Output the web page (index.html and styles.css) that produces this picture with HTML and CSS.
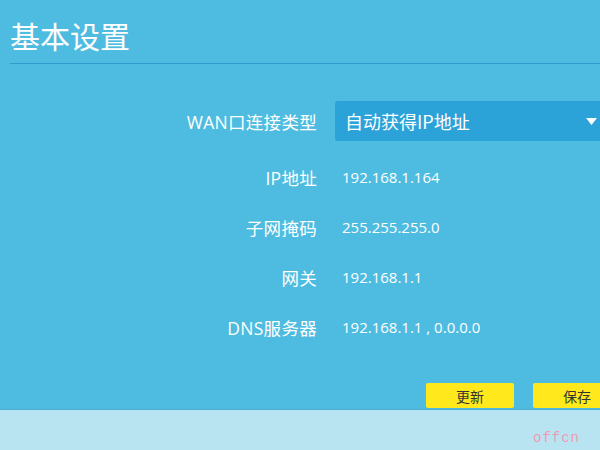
FILE: index.html
```html
<!DOCTYPE html>
<html lang="zh-CN">
<head>
    <meta charset="UTF-8">
    <meta name="viewport" content="width=device-width, initial-scale=1.0">
    <title>基本设置</title>
    <link rel="stylesheet" href="styles.css">
</head>
<body>
    <div class="panel">
        <h1 class="title">基本设置</h1>
        <div class="form">
            <div class="row row-select">
                <label class="label">WAN口连接类型</label>
                <div class="select">
                    <span>自动获得IP地址</span>
                    <svg class="arrow" width="11" height="7" viewBox="0 0 11 7"><polygon points="0,0 11,0 5.5,7" fill="#fff"/></svg>
                </div>
            </div>
            <div class="row">
                <label class="label">IP地址</label>
                <div class="value">192.168.1.164</div>
            </div>
            <div class="row">
                <label class="label">子网掩码</label>
                <div class="value">255.255.255.0</div>
            </div>
            <div class="row">
                <label class="label">网关</label>
                <div class="value">192.168.1.1</div>
            </div>
            <div class="row">
                <label class="label">DNS服务器</label>
                <div class="value">192.168.1.1 , 0.0.0.0</div>
            </div>
        </div>
        <div class="actions">
            <button class="btn">更新</button>
            <button class="btn">保存</button>
        </div>
    </div>
    <div class="footer">
        <span class="mark">offcn</span>
    </div>
</body>
</html>
```

FILE: styles.css
```css
* { margin:0; padding:0; box-sizing: border-box; }
html, body {
    width: 600px;
    height: 450px;
    overflow: hidden;
}
body {
    font-family: "Noto Sans CJK SC", "Open Sans", sans-serif;
    color: #fff;
    background-color: #b8e4f2;
}
.panel {
    height: 410px;
    background-color: #4ebce0;
    padding-left: 10px;
    border-bottom: 1px solid #49afd2;
}
.title {
    font-size: 30px;
    font-weight: normal;
    line-height: 40px;
    padding-top: 15px;
    padding-bottom: 8px;
    border-bottom: 1px solid #2f9bd0;
}
.form {
    padding-top: 37px;
}
.row {
    display: grid;
    grid-template-columns: 307px 1fr;
    column-gap: 18px;
    align-items: center;
    height: 50px;
}
.row-select {
    height: 40px;
    margin-bottom: 11px;
}
.label {
    text-align: right;
    font-family: "Open Sans", "Noto Sans CJK SC", sans-serif;
    font-size: 17.5px;
    letter-spacing: 0.3px;
}
.select {
    display: flex;
    align-items: center;
    justify-content: space-between;
    height: 40px;
    padding: 0 3px 0 10px;
    background-color: #2ba3d9;
    border-radius: 3px 0 0 3px;
    font-size: 18px;
}
.value {
    padding-left: 7px;
    font-family: "Open Sans", sans-serif;
    font-size: 15px;
}
.actions {
    display: flex;
    gap: 19px;
    padding-left: 416px;
    margin-top: 31px;
}
.btn {
    flex: none;
    width: 88px;
    height: 25px;
    border: none;
    border-radius: 2px;
    background-color: #ffe91c;
    color: #333;
    font-family: "Noto Sans CJK SC", sans-serif;
    font-size: 14px;
}
.footer {
    height: 40px;
    padding: 18px 0 0 533px;
    line-height: 14px;
}
.mark {
    font-family: "Liberation Mono", monospace;
    font-size: 14px;
    color: #f19bb3;
    letter-spacing: 1px;
}
```
